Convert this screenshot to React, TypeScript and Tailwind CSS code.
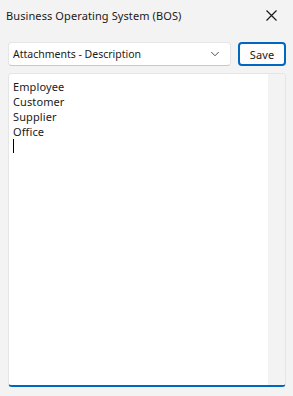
import { ChevronDown } from "lucide-react";

const lines = ["Employee", "Customer", "Supplier", "Office"];

export default function App() {
  return (
    <div
      className="w-[293px] h-[396px] bg-[#f3f3f3] flex flex-col text-[#1a1a1a] text-[11px] tracking-[0.1px]"
      style={{ fontFamily: '"Noto Sans", "Open Sans", sans-serif' }}
    >
      {/* title bar */}
      <div className="h-[31px] flex items-center justify-between pl-[6px] pr-[16px]">
        <span className="leading-none">Business Operating System (BOS)</span>
        <svg width="11" height="11" viewBox="0 0 11 11" className="text-[#1a1a1a]">
          <path d="M0.5 0.5 L10.5 10.5 M10.5 0.5 L0.5 10.5" stroke="currentColor" strokeWidth="1.2" />
        </svg>
      </div>

      {/* toolbar */}
      <div className="mt-[11px] flex items-center gap-[7px] pl-[8px] pr-[7px]">
        <div className="h-[24px] flex-1 flex items-center justify-between bg-white border border-[#e5e5e5] border-b-[#c8c8c8] rounded-[4px] pl-[4px] pr-[8px]">
          <span className="leading-none text-[10.5px] tracking-normal">Attachments - Description</span>
          <ChevronDown size={14} strokeWidth={1.5} className="text-[#333]" />
        </div>
        <button className="h-[24px] w-[48px] bg-[#fdfdfd] border-2 border-[#0067c0] rounded-[4px] leading-none">
          Save
        </button>
      </div>

      {/* memo */}
      <div className="mt-[7px] ml-[8px] mr-[7px] h-[314px] flex bg-white border border-[#e5e5e5] border-b-2 border-b-[#0067c0] rounded-[4px] overflow-hidden">
        <div className="flex-1 pl-[4px] pt-[5px] leading-[15px]">
          {lines.map((l) => (
            <div key={l}>{l}</div>
          ))}
          <div className="w-px h-[14px] bg-black" />
        </div>
        <div className="w-[17px] bg-[#f3f3f3]" />
      </div>
    </div>
  );
}
